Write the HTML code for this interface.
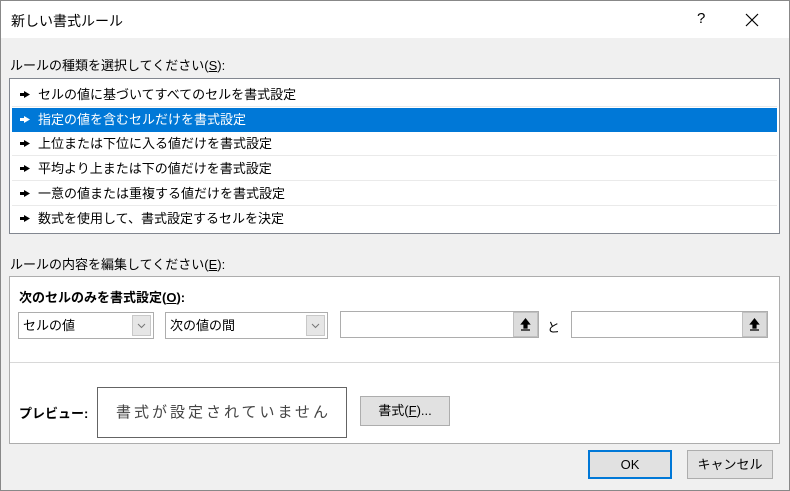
<!DOCTYPE html>
<html><head><meta charset="utf-8"><style>
*{box-sizing:border-box;margin:0;padding:0}
body{width:790px;height:491px;background:#f0f0f0;font-family:"Liberation Sans","Noto Sans CJK JP",sans-serif;font-size:13px;color:#000;position:relative;overflow:hidden}
.a{position:absolute}
.frame{left:0;top:0;width:790px;height:491px;border:1px solid #888}
.title{left:1px;top:1px;width:788px;height:37px;background:#fff}
.list{left:9px;top:78px;width:771px;height:156px;border:1px solid #828790;background:#fff}
.row{position:absolute;left:2px;width:765px;height:24px;line-height:24px;padding-left:8px;border-bottom:1px solid #eaeaea;font-size:13px}
.row svg{display:inline-block;vertical-align:middle;margin-right:8px;margin-top:-2px}
.sel{background:#0078d7;color:#fff;border-bottom:none}
.panel{left:9px;top:276px;width:771px;height:168px;border:1px solid #adadad;background:#fff}
.combo{border:1px solid #adadad;background:#fff;height:27px;line-height:25px;padding-left:4px;font-size:13px}
.dd{position:absolute;right:2px;top:2px;width:19px;height:21px;background:#e6e6e6;border:1px solid #c8c8c8}
.inp{border:1px solid #adadad;background:#fff;height:27px}
.up{position:absolute;right:0;top:0;width:25px;height:25px;background:#dcdcdc;border:1px solid #c0c0c0}
.btn{background:#e1e1e1;border:1px solid #adadad;text-align:center;font-size:13px}
</style></head><body>
<div class="a frame"></div>
<div class="a title"></div>
<div class="a" style="left:11px;top:11px;font-size:14px">新しい書式ルール</div>
<div class="a" style="left:697px;top:10px;font-size:15px">?</div>
<svg class="a" style="left:745px;top:13px" width="14" height="14"><path d="M1 1L13 13M13 1L1 13" stroke="#000" stroke-width="1.2"/></svg>
<div class="a" style="left:10px;top:55px;font-size:13px">ルールの種類を選択してください(<u>S</u>):</div>
<div class="a list">
<div class="row" style="top:4px"><svg width="10" height="7"><path d="M0 2H4V0L10 3.5L4 7V5H0Z" fill="currentColor"/></svg>セルの値に基づいてすべてのセルを書式設定</div>
<div class="row sel" style="top:29px"><svg width="10" height="7"><path d="M0 2H4V0L10 3.5L4 7V5H0Z" fill="currentColor"/></svg>指定の値を含むセルだけを書式設定</div>
<div class="row" style="top:53px"><svg width="10" height="7"><path d="M0 2H4V0L10 3.5L4 7V5H0Z" fill="currentColor"/></svg>上位または下位に入る値だけを書式設定</div>
<div class="row" style="top:78px"><svg width="10" height="7"><path d="M0 2H4V0L10 3.5L4 7V5H0Z" fill="currentColor"/></svg>平均より上または下の値だけを書式設定</div>
<div class="row" style="top:103px"><svg width="10" height="7"><path d="M0 2H4V0L10 3.5L4 7V5H0Z" fill="currentColor"/></svg>一意の値または重複する値だけを書式設定</div>
<div class="row" style="top:128px;border-bottom:none"><svg width="10" height="7"><path d="M0 2H4V0L10 3.5L4 7V5H0Z" fill="currentColor"/></svg>数式を使用して、書式設定するセルを決定</div>
</div>
<div class="a" style="left:10px;top:254px;font-size:13px">ルールの内容を編集してください(<u>E</u>):</div>
<div class="a panel"></div>
<div class="a" style="left:19px;top:287px;font-size:13px;font-weight:bold">次のセルのみを書式設定(<u>O</u>):</div>
<div class="a combo" style="left:18px;top:312px;width:136px">セルの値<div class="dd"><svg width="17" height="19"><path d="M5 8L8.5 11.5L12 8" fill="none" stroke="#777"/></svg></div></div>
<div class="a combo" style="left:165px;top:312px;width:163px">次の値の間<div class="dd"><svg width="17" height="19"><path d="M5 8L8.5 11.5L12 8" fill="none" stroke="#777"/></svg></div></div>
<div class="a inp" style="left:340px;top:311px;width:199px"><div class="up"><svg width="23" height="23"><path d="M11.5 6L7.5 11H10V15H13V11H15.5Z M7 17H16" fill="#000" stroke="#000" stroke-width="1.2"/></svg></div></div>
<div class="a" style="left:547px;top:317px;font-size:13px">と</div>
<div class="a inp" style="left:571px;top:311px;width:197px"><div class="up"><svg width="23" height="23"><path d="M11.5 6L7.5 11H10V15H13V11H15.5Z M7 17H16" fill="#000" stroke="#000" stroke-width="1.2"/></svg></div></div>
<div class="a" style="left:10px;top:362px;width:769px;height:1px;background:#d8d8d8"></div>
<div class="a" style="left:19px;top:403px;font-size:13px;font-weight:bold">プレビュー:</div>
<div class="a" style="left:97px;top:387px;width:250px;height:51px;border:1px solid #646464;background:#fff;text-align:center;line-height:49px;font-size:15px;color:#444;letter-spacing:3px;padding-left:3px">書式が設定されていません</div>
<div class="a btn" style="left:360px;top:396px;width:90px;height:30px;line-height:28px">書式(<u>F</u>)...</div>
<div class="a btn" style="left:588px;top:450px;width:84px;height:29px;line-height:25px;border:2px solid #0078d7">OK</div>
<div class="a btn" style="left:687px;top:450px;width:86px;height:29px;line-height:27px">キャンセル</div>
</body></html>
